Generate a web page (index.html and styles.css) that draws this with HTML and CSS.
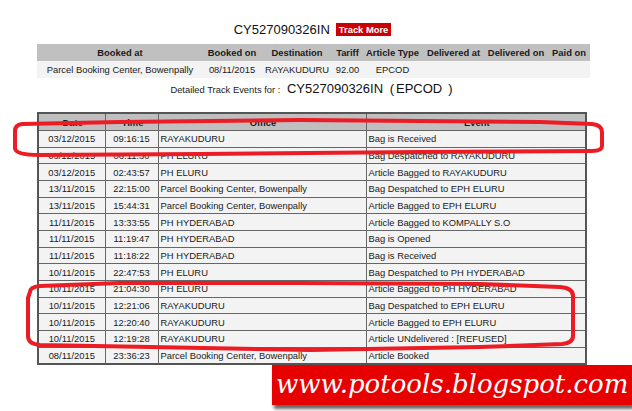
FILE: index.html
```html
<!DOCTYPE html>
<html lang="en">

<head>
    <meta charset="UTF-8">
    <title>Speed Post Tracking</title>
    <link rel="stylesheet" href="styles.css">
</head>

<body>
    <div class="page">
        <div class="title">
            <span class="article-no">CY527090326IN</span>
            <span class="track-more">Track More</span>
        </div>

        <table class="summary">
            <colgroup>
                <col style="width:166px"><col style="width:58px"><col style="width:72px"><col style="width:29px">
                <col style="width:61px"><col style="width:61px"><col style="width:64px"><col style="width:42px">
            </colgroup>
            <tr>
                <th>Booked at</th>
                <th>Booked on</th>
                <th>Destination</th>
                <th>Tariff</th>
                <th>Article Type</th>
                <th>Delivered at</th>
                <th>Delivered on</th>
                <th>Paid on</th>
            </tr>
            <tr>
                <td>Parcel Booking Center, Bowenpally</td>
                <td>08/11/2015</td>
                <td>RAYAKUDURU</td>
                <td>92.00</td>
                <td>EPCOD</td>
                <td></td>
                <td></td>
                <td></td>
            </tr>
        </table>

        <div class="detail">
            Detailed Track Events for :
            <span class="big">CY527090326IN</span>
            <span class="big">(</span><span class="big code">EPCOD</span><span class="big">)</span>
        </div>

        <table class="events">
            <colgroup>
                <col style="width:67px"><col style="width:53px"><col style="width:208px"><col>
            </colgroup>
            <tr><th>Date</th><th>Time</th><th>Office</th><th>Event</th></tr>
            <tr><td class="c">03/12/2015</td><td class="c">09:16:15</td><td>RAYAKUDURU</td><td>Bag is Received</td></tr>
            <tr><td class="c">03/12/2015</td><td class="c">06:11:30</td><td>PH ELURU</td><td>Bag Despatched to RAYAKUDURU</td></tr>
            <tr><td class="c">03/12/2015</td><td class="c">02:43:57</td><td>PH ELURU</td><td>Article Bagged to RAYAKUDURU</td></tr>
            <tr><td class="c">13/11/2015</td><td class="c">22:15:00</td><td>Parcel Booking Center, Bowenpally</td><td>Bag Despatched to EPH ELURU</td></tr>
            <tr><td class="c">13/11/2015</td><td class="c">15:44:31</td><td>Parcel Booking Center, Bowenpally</td><td>Article Bagged to EPH ELURU</td></tr>
            <tr><td class="c">11/11/2015</td><td class="c">13:33:55</td><td>PH HYDERABAD</td><td>Article Bagged to KOMPALLY S.O</td></tr>
            <tr><td class="c">11/11/2015</td><td class="c">11:19:47</td><td>PH HYDERABAD</td><td>Bag is Opened</td></tr>
            <tr><td class="c">11/11/2015</td><td class="c">11:18:22</td><td>PH HYDERABAD</td><td>Bag is Received</td></tr>
            <tr><td class="c">10/11/2015</td><td class="c">22:47:53</td><td>PH ELURU</td><td>Bag Despatched to PH HYDERABAD</td></tr>
            <tr><td class="c">10/11/2015</td><td class="c">21:04:30</td><td>PH ELURU</td><td>Article Bagged to PH HYDERABAD</td></tr>
            <tr><td class="c">10/11/2015</td><td class="c">12:21:06</td><td>RAYAKUDURU</td><td>Bag Despatched to EPH ELURU</td></tr>
            <tr><td class="c">10/11/2015</td><td class="c">12:20:40</td><td>RAYAKUDURU</td><td>Article Bagged to EPH ELURU</td></tr>
            <tr><td class="c">10/11/2015</td><td class="c">12:19:28</td><td>RAYAKUDURU</td><td>Article UNdelivered : [REFUSED]</td></tr>
            <tr><td class="c">08/11/2015</td><td class="c">23:36:23</td><td>Parcel Booking Center, Bowenpally</td><td>Article Booked</td></tr>
        </table>
    </div>

    <!-- hand drawn marks over the table -->
    <svg class="marks" width="632" height="411" viewBox="0 0 632 411">
        <path d="M22 124 L120 122 L300 120 L540 122 L592 124 Q602 125 602 132 L602 146 Q602 151 592 151 L420 152 L200 154 L40 155 Q15 155 15 148 L15 131 Q15 125 22 124 Z" />
        <path d="M30 292 Q30 287 40 286 L120 283 L300 283 L480 284 L560 287 Q573 288 573 296 L573 336 Q573 343 562 344 L480 347 L310 350 L150 347 L40 345 Q28 344 28 336 L28 298 Z" />
    </svg>

    <div class="watermark">www.potools.blogspot.com</div>
</body>

</html>
```

FILE: styles.css
```css
body {
    margin: 0;
    background-color: #FFFFFF;
    color: #1A1A1A;
    font-family: "Liberation Sans", Arial, sans-serif;
    font-size: 9.4px;
}

.page {
    width: 553px;
    margin-left: 37px;
    padding-top: 23px;
}

.title {
    display: flex;
    justify-content: center;
    align-items: center;
    height: 13px;
    gap: 6px;
    margin-left: -2px;
}

.article-no {
    font-size: 13px;
    line-height: 13px;
    color: #111111;
}

.track-more {
    background-color: #CC0000;
    color: #FFFFFF;
    font-weight: bold;
    height: 13px;
    line-height: 13px;
    padding: 0 3px;
}

.summary {
    width: 553px;
    margin-top: 8px;
    border-collapse: collapse;
    table-layout: fixed;
}

.summary th,
.summary td {
    height: 17px;
    padding: 0;
    text-align: center;
    white-space: nowrap;
}

.summary th {
    background-color: #C0C0C0;
}

.summary td {
    background-color: #F3F3F3;
}

.detail {
    text-align: center;
    padding-top: 3px;
    line-height: 16px;
    height: 16px;
    margin-bottom: 15px;
    margin-right: 4px;
}

.detail .big {
    font-size: 13px;
    color: #111111;
    margin-left: 4px;
}

.detail .code {
    margin-left: 2px;
    margin-right: 2px;
}

.events {
    width: 550px;
    border-collapse: collapse;
    table-layout: fixed;
    border: 2px solid #555555;
}

.events th,
.events td {
    border: 1px solid #666666;
    padding: 0 0 0 2px;
    height: 15.67px;
    white-space: nowrap;
    background-color: #F3F3F3;
    text-align: left;
}

.events th {
    background-color: #BFBFBF;
    text-align: center;
    height: 16px;
}

.events td.c {
    text-align: center;
    padding: 0;
}

.marks {
    position: absolute;
    top: 0;
    left: 0;
    pointer-events: none;
}

.marks path {
    fill: none;
    stroke: #EC1C24;
    stroke-width: 4;
    stroke-linejoin: round;
}

.watermark {
    position: absolute;
    left: 272px;
    top: 365px;
    width: 356px;
    height: 40px;
    padding-left: 4px;
    background-color: #E60000;
    box-shadow: 2px 4px 3px rgba(0, 0, 0, 0.6);
    color: #FFFFFF;
    font-family: "DejaVu Serif", serif;
    font-style: italic;
    font-size: 26px;
    line-height: 38px;
    white-space: nowrap;
    overflow: hidden;
}
```
